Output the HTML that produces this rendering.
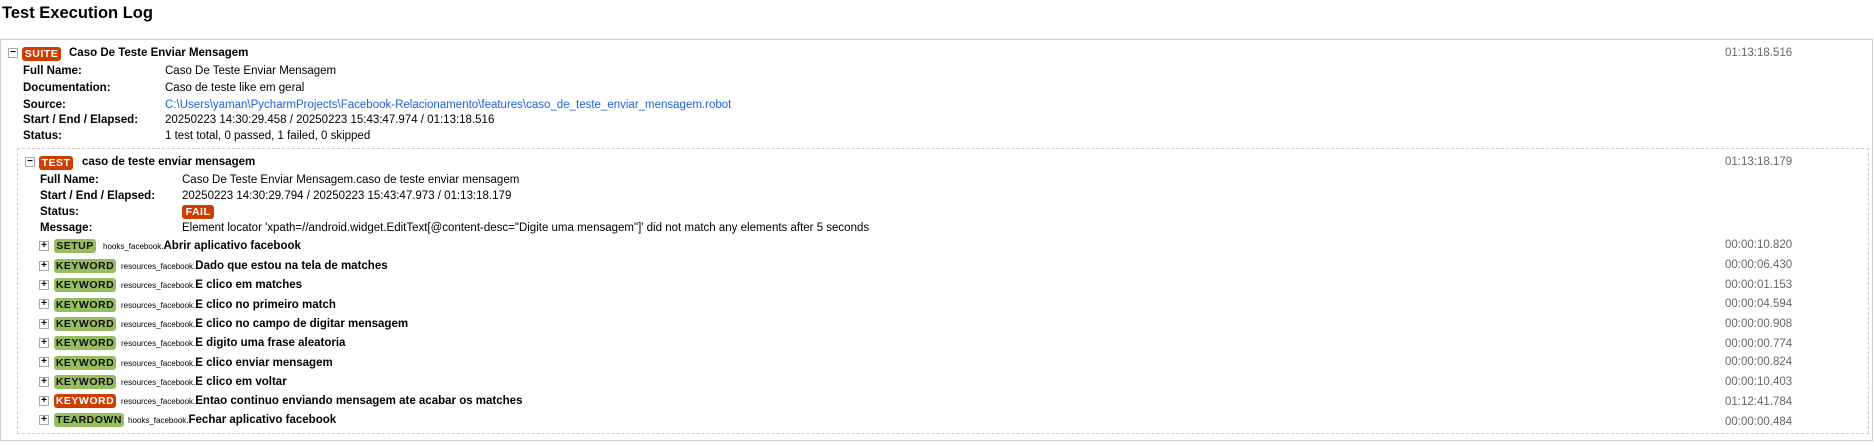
<!DOCTYPE html>
<html><head><meta charset="utf-8"><style>
body{margin:0;width:1874px;height:446px;background:#fff;font-family:"Liberation Sans",Arial,sans-serif;font-size:11.5px;color:#000;position:relative;overflow:hidden}
.a{position:absolute;white-space:nowrap;line-height:14px}
h1{position:absolute;left:2px;top:3px;margin:0;font-size:16.5px;font-weight:bold;line-height:20px}
.box{position:absolute;box-sizing:border-box}
.tog{position:absolute;width:10px;height:10px;border:1px solid #aaa;box-sizing:border-box;font-size:10px;line-height:8px;text-align:center;font-weight:bold;background:#fff}
.lab{position:absolute;height:14px;border-radius:3px;font-size:10.5px;font-weight:bold;line-height:14px;text-align:center;letter-spacing:0.5px}
.g{background:#97bd61;color:#111}
.r{background:#ce3e01;color:#fff}
.b{font-weight:bold}
.el{position:absolute;left:1725px;color:#666;line-height:14px}
.sm{font-size:8px}
.kn{font-size:11.5px;font-weight:bold}
</style></head><body>
<h1>Test Execution Log</h1>
<div class="box" style="left:0;top:39px;width:1873px;height:402px;border:1px solid #ccc"></div>
<div class="tog" style="left:8px;top:48px">−</div>
<div class="lab r" style="left:22px;top:47px;width:39px">SUITE</div>
<div class="a b" style="left:69px;top:46px">Caso De Teste Enviar Mensagem</div>
<div class="el" style="top:46px">01:13:18.516</div>
<div class="a b" style="left:23px;top:64px">Full Name:</div><div class="a" style="left:165px;top:64px">Caso De Teste Enviar Mensagem</div>
<div class="a b" style="left:23px;top:81px">Documentation:</div><div class="a" style="left:165px;top:81px">Caso de teste like em geral</div>
<div class="a b" style="left:23px;top:98px">Source:</div><div class="a" style="left:165px;top:98px;color:#1b62d8">C:\Users\yaman\PycharmProjects\Facebook-Relacionamento\features\caso_de_teste_enviar_mensagem.robot</div>
<div class="a b" style="left:23px;top:113px">Start / End / Elapsed:</div><div class="a" style="left:165px;top:113px">20250223 14:30:29.458 / 20250223 15:43:47.974 / 01:13:18.516</div>
<div class="a b" style="left:23px;top:129px">Status:</div><div class="a" style="left:165px;top:129px">1 test total, 0 passed, 1 failed, 0 skipped</div>

<div class="box" style="left:17px;top:148px;width:1852px;height:286px;border:1px dashed #ccc"></div>
<div class="tog" style="left:25px;top:157px">−</div>
<div class="lab r" style="left:39px;top:156px;width:34px">TEST</div>
<div class="a b" style="left:82px;top:155px">caso de teste enviar mensagem</div>
<div class="el" style="top:155px">01:13:18.179</div>
<div class="a b" style="left:40px;top:173px">Full Name:</div><div class="a" style="left:182px;top:173px">Caso De Teste Enviar Mensagem.caso de teste enviar mensagem</div>
<div class="a b" style="left:40px;top:189px">Start / End / Elapsed:</div><div class="a" style="left:182px;top:189px">20250223 14:30:29.794 / 20250223 15:43:47.973 / 01:13:18.179</div>
<div class="a b" style="left:40px;top:205px">Status:</div><div class="lab r" style="left:182px;top:205px;width:32px">FAIL</div>
<div class="a b" style="left:40px;top:221px">Message:</div><div class="a" style="left:182px;top:221px">Element locator 'xpath=//android.widget.EditText[@content-desc="Digite uma mensagem"]' did not match any elements after 5 seconds</div>

<div class="tog" style="left:39px;top:241px">+</div><div class="lab g" style="left:54px;top:239px;width:42px">SETUP</div><div class="a" style="left:103px;top:239px"><span class="sm">hooks_facebook.</span><span class="kn">Abrir aplicativo facebook</span></div><div class="el" style="top:238px">00:00:10.820</div>
<div class="tog" style="left:39px;top:261px">+</div><div class="lab g" style="left:54px;top:259px;width:62px">KEYWORD</div><div class="a" style="left:121px;top:259px"><span class="sm">resources_facebook.</span><span class="kn">Dado que estou na tela de matches</span></div><div class="el" style="top:258px">00:00:06.430</div>
<div class="tog" style="left:39px;top:280px">+</div><div class="lab g" style="left:54px;top:278px;width:62px">KEYWORD</div><div class="a" style="left:121px;top:278px"><span class="sm">resources_facebook.</span><span class="kn">E clico em matches</span></div><div class="el" style="top:278px">00:00:01.153</div>
<div class="tog" style="left:39px;top:299px">+</div><div class="lab g" style="left:54px;top:298px;width:62px">KEYWORD</div><div class="a" style="left:121px;top:298px"><span class="sm">resources_facebook.</span><span class="kn">E clico no primeiro match</span></div><div class="el" style="top:297px">00:00:04.594</div>
<div class="tog" style="left:39px;top:319px">+</div><div class="lab g" style="left:54px;top:317px;width:62px">KEYWORD</div><div class="a" style="left:121px;top:317px"><span class="sm">resources_facebook.</span><span class="kn">E clico no campo de digitar mensagem</span></div><div class="el" style="top:317px">00:00:00.908</div>
<div class="tog" style="left:39px;top:338px">+</div><div class="lab g" style="left:54px;top:336px;width:62px">KEYWORD</div><div class="a" style="left:121px;top:336px"><span class="sm">resources_facebook.</span><span class="kn">E digito uma frase aleatoria</span></div><div class="el" style="top:337px">00:00:00.774</div>
<div class="tog" style="left:39px;top:357px">+</div><div class="lab g" style="left:54px;top:356px;width:62px">KEYWORD</div><div class="a" style="left:121px;top:356px"><span class="sm">resources_facebook.</span><span class="kn">E clico enviar mensagem</span></div><div class="el" style="top:355px">00:00:00.824</div>
<div class="tog" style="left:39px;top:377px">+</div><div class="lab g" style="left:54px;top:375px;width:62px">KEYWORD</div><div class="a" style="left:121px;top:375px"><span class="sm">resources_facebook.</span><span class="kn">E clico em voltar</span></div><div class="el" style="top:375px">00:00:10.403</div>
<div class="tog" style="left:39px;top:396px">+</div><div class="lab r" style="left:54px;top:394px;width:62px">KEYWORD</div><div class="a" style="left:121px;top:394px"><span class="sm">resources_facebook.</span><span class="kn">Entao continuo enviando mensagem ate acabar os matches</span></div><div class="el" style="top:395px">01:12:41.784</div>
<div class="tog" style="left:39px;top:415px">+</div><div class="lab g" style="left:54px;top:413px;width:70px">TEARDOWN</div><div class="a" style="left:128px;top:413px"><span class="sm">hooks_facebook.</span><span class="kn">Fechar aplicativo facebook</span></div><div class="el" style="top:415px">00:00:00.484</div>
</body></html>
